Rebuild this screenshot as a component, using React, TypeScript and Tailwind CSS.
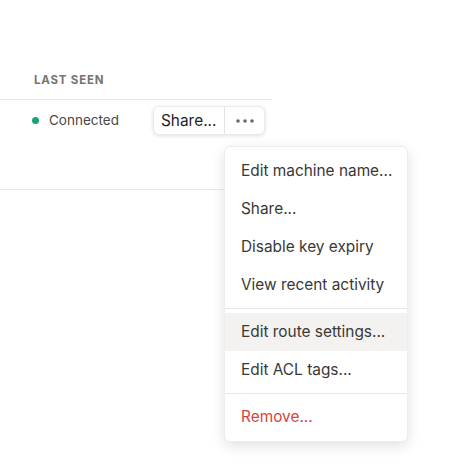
import React from "react";

const font = { fontFamily: "Inter, 'Noto Sans', sans-serif" };

function Item({ children, active, danger }: { children: React.ReactNode; active?: boolean; danger?: boolean }) {
  return (
    <div
      className={
        "h-[38px] flex items-center pl-4 text-[15.4px] whitespace-nowrap " +
        (active ? "bg-[#f3f2f1] " : "") +
        (danger ? "text-[#d6453d]" : "text-[#3a3836]")
      }
    >
      {children}
    </div>
  );
}

export default function App() {
  return (
    <div className="relative w-[471px] h-[476px] bg-white overflow-hidden" style={font}>
      <div className="w-[272px]">
        <div className="h-[100px] flex items-end pb-[10px] pl-[34px] border-b border-[#e9e8e6]">
          <span className="text-[11.5px] font-bold tracking-[0.07em] text-[#77736f] uppercase">Last seen</span>
        </div>
        <div className="h-[90px] border-b border-[#e9e8e6] pt-[6px] flex items-start">
          <div className="flex items-center h-[29px] pl-[32px] w-[153px]">
            <span className="w-[7px] h-[7px] rounded-full bg-[#1aa37a] mr-[10px]" />
            <span className="text-[13.5px] text-[#4b4845]">Connected</span>
          </div>
          <div className="flex h-[29px] w-[112px] bg-white rounded-md border border-[#ebeae8] shadow-[0_1px_4px_rgba(0,0,0,0.12)]">
            <div className="w-[71px] flex items-center pl-[7px] text-[15.4px] text-[#24221f] border-r border-[#e4e3e1] whitespace-nowrap">
              Share...
            </div>
            <div className="flex-1 flex items-center justify-center">
              <svg width="18" height="4" viewBox="0 0 18 4">
                <circle cx="2" cy="2" r="1.8" fill="#6b6865" />
                <circle cx="9" cy="2" r="1.8" fill="#6b6865" />
                <circle cx="16" cy="2" r="1.8" fill="#6b6865" />
              </svg>
            </div>
          </div>
        </div>
      </div>

      <div className="absolute left-[224px] top-[146px] w-[184px] py-[5px] bg-white rounded-md border border-[#eeedeb] shadow-[0_4px_14px_rgba(0,0,0,0.12)]">
        <Item>Edit machine name...</Item>
        <Item>Share...</Item>
        <Item>Disable key expiry</Item>
        <Item>View recent activity</Item>
        <div className="my-[4px] h-px bg-[#e7e6e4]" />
        <Item active>Edit route settings...</Item>
        <Item>Edit ACL tags...</Item>
        <div className="my-[4px] h-px bg-[#e7e6e4]" />
        <Item danger>Remove...</Item>
      </div>
    </div>
  );
}
